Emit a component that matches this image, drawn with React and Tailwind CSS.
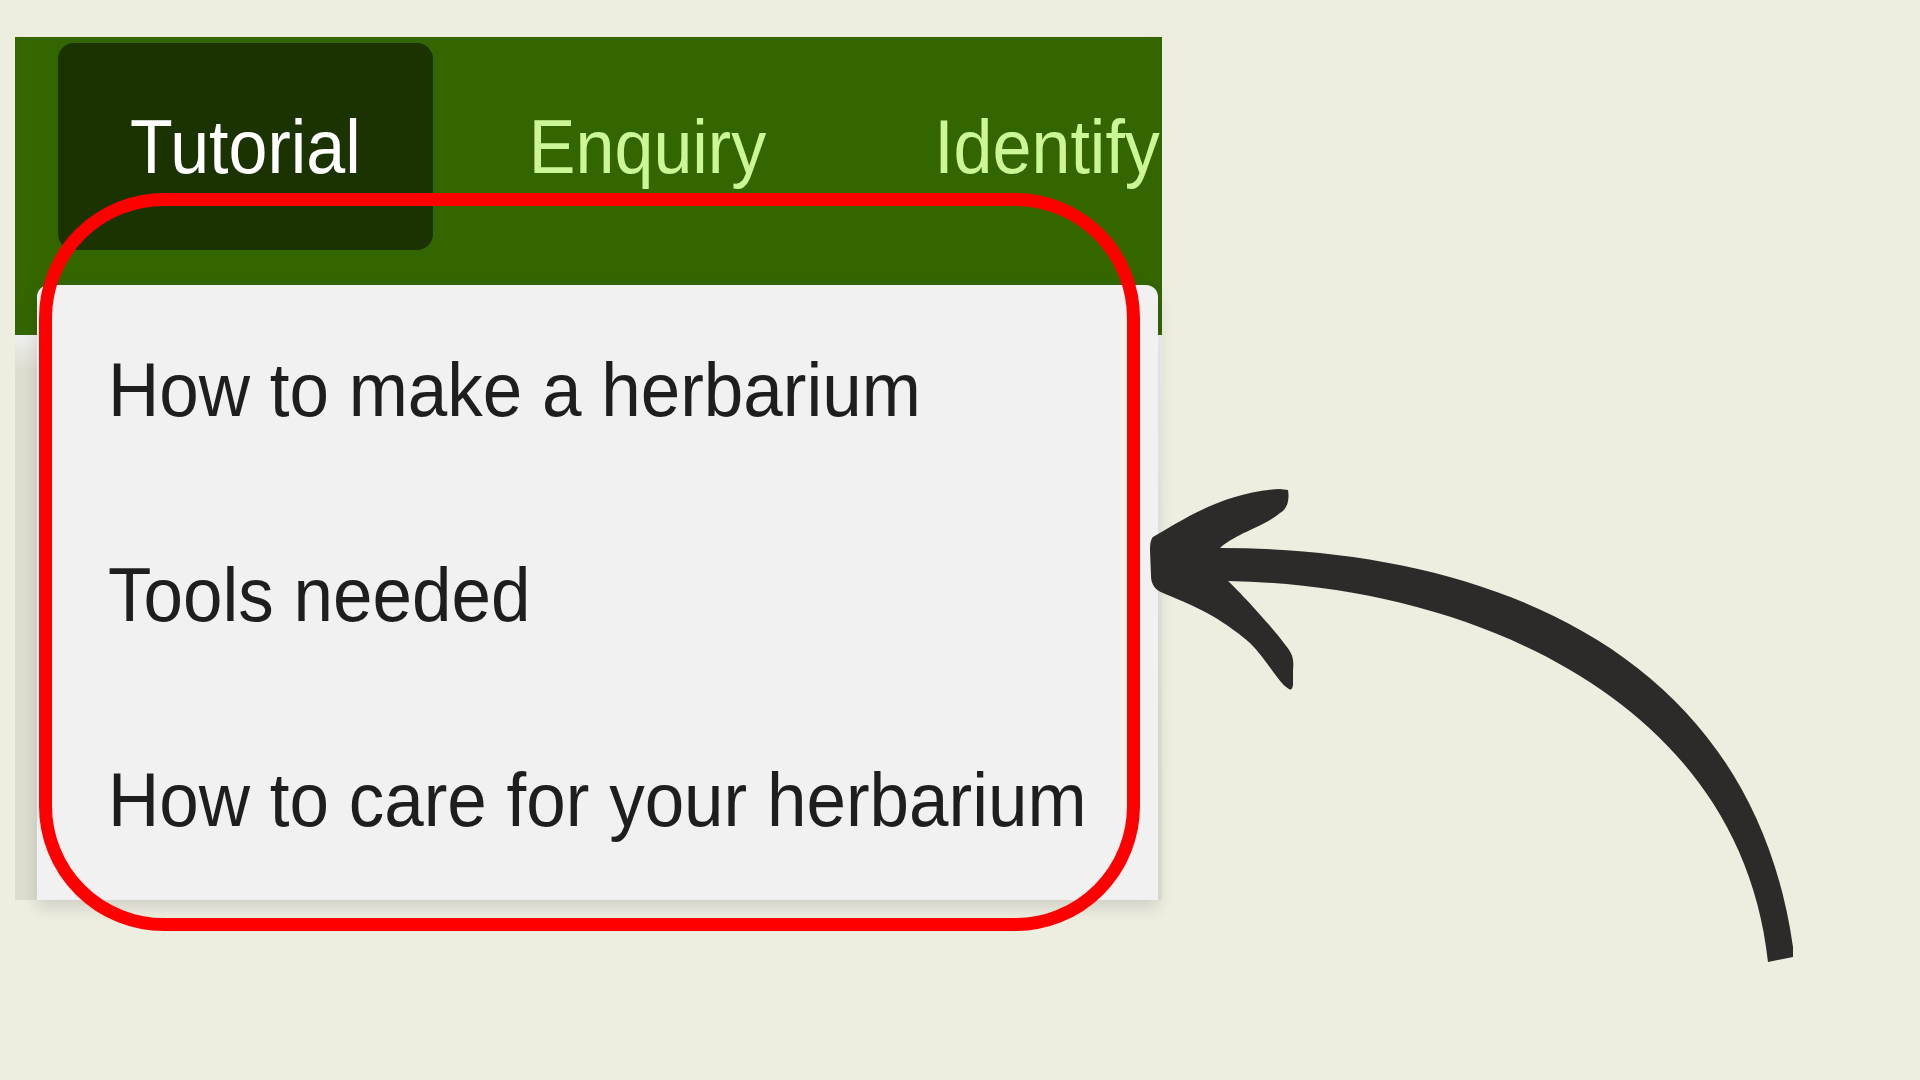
import React from "react";

const font = { fontFamily: '"Liberation Sans", Arial, sans-serif' };

function Arrow() {
  return (
    <svg
      className="absolute left-[1140px] top-[480px]"
      width="670"
      height="500"
      viewBox="0 0 670 500"
    >
      <path
        fill="#2d2b29"
        d="M 13 57
           C 35 45, 80 12, 140 9
           L 148 10
           C 150 22, 146 30, 140 33
           C 130 42, 110 50, 100 55
           C 92 59, 84 64, 80 68
           C 340 68, 610 165, 653 467
           L 653 477
           L 628 482
           C 600 220, 330 105, 88 101
           C 100 112, 135 150, 147 167
           C 153 175, 154 180, 153 190
           L 153 205
           Q 152 211, 149 209
           C 145 207, 140 201, 137 197
           C 128 185, 120 173, 110 163
           C 95 150, 80 140, 67 133
           C 50 124, 35 118, 23 113
           C 15 110, 11 104, 11 96
           L 10 70
           C 10 63, 11 59, 13 57
           Z"
      />
    </svg>
  );
}

export default function App() {
  const items = [
    "How to make a herbarium",
    "Tools needed",
    "How to care for your herbarium",
  ];
  return (
    <div
      className="relative w-[1920px] h-[1080px] overflow-hidden bg-[#edede0] pt-[37px] pl-[15px]"
      style={font}
    >
      <div className="w-[1147px] flex flex-col">
        <nav className="h-[298px] bg-[#336600] overflow-hidden flex items-start gap-[24px] pl-[43px] pt-[6px]">
          <div className="shrink-0 h-[207px] px-[72px] rounded-[16px] bg-[#1b3300] flex items-center">
            <span className="block text-[70px] leading-[80px] text-white scale-y-[1.08]">
              Tutorial
            </span>
          </div>
          <div className="shrink-0 h-[207px] px-[72px] flex items-center">
            <span className="block text-[70px] leading-[80px] text-[#ccf799] scale-y-[1.08]">
              Enquiry
            </span>
          </div>
          <div className="shrink-0 h-[207px] px-[72px] flex items-center">
            <span className="block text-[70px] leading-[80px] text-[#ccf799] scale-y-[1.08] whitespace-nowrap">
              Identify
            </span>
          </div>
        </nav>
        <div className="h-[565px] flex">
          <div className="w-[22px] bg-[linear-gradient(to_bottom,#efefef,#dcdccf_36px)]" />
          <div className="flex-1 bg-[#f1f1f1]" />
          <div className="w-[4px] bg-[linear-gradient(to_bottom,#f0f0f0,#e2e2d8_80%)]" />
        </div>
      </div>

      {/* dropdown menu */}
      <div className="absolute left-[37px] top-[285px] w-[1121px] h-[615px] bg-[#f1f1f1] rounded-t-[12px] shadow-[0_8px_16px_rgba(0,0,0,0.12)] flex flex-col">
        {items.map((t) => (
          <div key={t} className="pl-[71px] pt-[65px] pb-[60px]">
            <span className="block text-[71px] leading-[80px] text-[#1e1e1e] scale-y-[1.07] origin-center whitespace-nowrap">
              {t}
            </span>
          </div>
        ))}
      </div>

      {/* red highlight */}
      <div className="absolute left-[39px] top-[193px] w-[1101px] h-[738px] border-[13px] border-[#ff0000] rounded-[125px]" />

      <Arrow />
    </div>
  );
}
